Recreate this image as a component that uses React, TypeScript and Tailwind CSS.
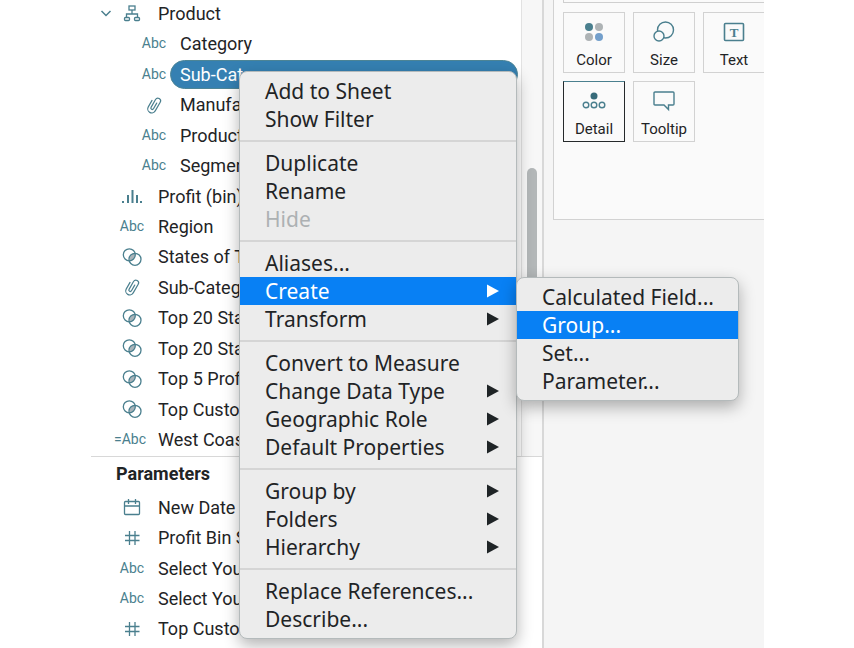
import type { ReactNode } from "react";

type IconKind = "tree" | "abc" | "clip" | "bars" | "set" | "calc" | "date" | "hash";
type Field = { label: string; icon: IconKind; nested?: boolean; open?: boolean; selected?: boolean };

const fields: Field[] = [
  { label: "Product", icon: "tree", open: true },
  { label: "Category", icon: "abc", nested: true },
  { label: "Sub-Category", icon: "abc", nested: true, selected: true },
  { label: "Manufact", icon: "clip", nested: true },
  { label: "Product Name", icon: "abc", nested: true },
  { label: "Segment", icon: "abc", nested: true },
  { label: "Profit (bin)", icon: "bars" },
  { label: "Region", icon: "abc" },
  { label: "States of Top", icon: "set" },
  { label: "Sub-Category", icon: "clip" },
  { label: "Top 20 States", icon: "set" },
  { label: "Top 20 States", icon: "set" },
  { label: "Top 5 Profit", icon: "set" },
  { label: "Top Customers", icon: "set" },
  { label: "West Coast", icon: "calc" },
];

const parameters: Field[] = [
  { label: "New Date", icon: "date" },
  { label: "Profit Bin Size", icon: "hash" },
  { label: "Select Your", icon: "abc" },
  { label: "Select Your", icon: "abc" },
  { label: "Top Customers", icon: "hash" },
];

function FieldIcon({ kind }: { kind: IconKind }) {
  const svg = "h-5 w-5 fill-none stroke-current";
  switch (kind) {
    case "abc":
      return <span>Abc</span>;
    case "calc":
      return <span className="-ml-1">=Abc</span>;
    case "tree":
      return (
        <svg viewBox="0 0 20 20" className={svg} strokeWidth="1.3">
          <rect x="7" y="3" width="6" height="4" />
          <path d="M10 7v4M4.500 14v-3h11v3" />
          <rect x="2.500" y="14.500" width="5" height="3" rx="1" />
          <rect x="12.500" y="14.500" width="5" height="3" rx="1" />
        </svg>
      );
    case "clip":
      return (
        <svg viewBox="0 0 20 20" className={svg} strokeWidth="1.2" strokeLinecap="round">
          <path
            transform="rotate(30 10 10)"
            d="M6 7v7.500a4 4 0 0 0 8 0V4.500a2.700 2.700 0 0 0-5.400 0V13.500a1.400 1.400 0 0 0 2.800 0V7"
          />
        </svg>
      );
    case "bars":
      return (
        <svg viewBox="0 0 20 20" className={svg} strokeWidth="2">
          <path d="M1 15v2M6 9v8M10.500 4v13M15 9v8M19 15v2" />
        </svg>
      );
    case "set":
      return (
        <svg viewBox="0 0 20 20" className={svg} strokeWidth="1.300">
          <path d="M8 14c-1-3 1-7.500 5-8 1 3-1 7.500-5 8z" fill="#aab4ba" stroke="none" />
          <circle cx="7.300" cy="7.800" r="6" />
          <circle cx="13" cy="12.300" r="6" />
        </svg>
      );
    case "date":
      return (
        <svg viewBox="0 0 20 20" className={svg} strokeWidth="1.300">
          <rect x="2.500" y="4.500" width="15" height="13" rx="1" />
          <path d="M2.500 9h15M6.500 2v5M13.500 2v5" />
        </svg>
      );
    case "hash":
      return (
        <svg viewBox="0 0 20 20" className={svg} strokeWidth="1.300">
          <path d="M7.500 3v14M13 3v14M3 7.500h14.500M3 12.500h14.500" />
        </svg>
      );
  }
}

function FieldRow({ field }: { field: Field }) {
  return (
    <li className={`flex min-h-0 flex-1 items-center ${field.nested ? "pl-[47px]" : "pl-[9px]"}`}>
      {!field.nested && (
        <span className="flex w-4 text-[#4a7f8e]">
          {field.open && (
            <svg viewBox="0 0 12 12" className="h-3 w-3 fill-none stroke-current" strokeWidth="1.500">
              <path d="M1.500 4 6 8.500 10.500 4" />
            </svg>
          )}
        </span>
      )}
      <span className="flex h-5 w-8 shrink-0 items-center justify-center text-[14px] whitespace-nowrap text-[#4a7f8e]">
        <FieldIcon kind={field.icon} />
      </span>
      <button
        type="button"
        className={`flex h-[29px] items-center whitespace-nowrap text-left text-[18px] ${
          field.selected
            ? "mr-6 flex-1 rounded-full border border-[#4d8596] bg-[#3580b2] pl-[9px] text-white"
            : "pl-[10px] text-[#1f2426]"
        }`}
      >
        {field.label}
      </button>
    </li>
  );
}

function Mark({ label, active, children }: { label: string; active?: boolean; children: ReactNode }) {
  return (
    <button
      type="button"
      className={`flex h-[61px] w-[62px] shrink-0 flex-col items-center justify-between border bg-[#fafafa] pt-[7px] pb-[2px] text-[15px] leading-5 text-[#1f2426] ${
        active ? "border-[#25292b] border-t-[#4a7f8e]" : "border-[#d2d2d2]"
      }`}
    >
      <svg viewBox="0 0 24 24" className="h-6 w-6 fill-none stroke-[#4a7f8e]" strokeWidth="1.400">
        {children}
      </svg>
      <span>{label}</span>
    </button>
  );
}

type Item = { label: string; arrow?: boolean; disabled?: boolean; active?: boolean; submenu?: Item[] };

const menu: Item[][] = [
  [{ label: "Add to Sheet" }, { label: "Show Filter" }],
  [{ label: "Duplicate" }, { label: "Rename" }, { label: "Hide", disabled: true }],
  [
    { label: "Aliases..." },
    {
      label: "Create",
      arrow: true,
      active: true,
      submenu: [
        { label: "Calculated Field..." },
        { label: "Group...", active: true },
        { label: "Set..." },
        { label: "Parameter..." },
      ],
    },
    { label: "Transform", arrow: true },
  ],
  [
    { label: "Convert to Measure" },
    { label: "Change Data Type", arrow: true },
    { label: "Geographic Role", arrow: true },
    { label: "Default Properties", arrow: true },
  ],
  [
    { label: "Group by", arrow: true },
    { label: "Folders", arrow: true },
    { label: "Hierarchy", arrow: true },
  ],
  [{ label: "Replace References..." }, { label: "Describe..." }],
];

const menuBox =
  "absolute rounded-lg border border-[#b4babb] bg-[#ececec] py-[5px] shadow-[0_6px_16px_rgba(0,0,0,0.3)]";

function MenuItem({ item }: { item: Item }) {
  return (
    <li className="relative">
      <button
        type="button"
        disabled={item.disabled}
        className={`flex h-7 w-full items-center justify-between pr-[17px] pl-[25px] text-left text-[21px] leading-7 whitespace-nowrap ${
          item.active ? "bg-[#0880f4] text-white" : item.disabled ? "text-[#adb1b3]" : "text-[#1f2426]"
        }`}
      >
        {item.label}
        {item.arrow && (
          <svg viewBox="0 0 12 14" className="h-[14px] w-3 fill-current">
            <path d="M0 0.500 12 7 0 13.500z" />
          </svg>
        )}
      </button>
      {item.submenu && (
        <ul className={`${menuBox} top-0 left-full w-[223px]`}>
          {item.submenu.map((sub) => (
            <MenuItem key={sub.label} item={sub} />
          ))}
        </ul>
      )}
    </li>
  );
}

export default function App() {
  return (
    <div className="relative h-screen overflow-hidden bg-white pr-[90px] pl-[91px] font-['Roboto',sans-serif]">
      <div className="flex h-full">
        <aside className="flex w-[453px] shrink-0 flex-col border-r-2 border-[#d8d8d8]">
          <div className="flex h-[457px] shrink-0 border-b border-[#d8d8d8]">
            <div className="flex min-w-0 flex-1 flex-col justify-end overflow-hidden pb-px">
              <ul className="-mr-[21px] flex h-[457px] shrink-0 flex-col">
                {fields.map((field, i) => (
                  <FieldRow key={i} field={field} />
                ))}
              </ul>
            </div>
            <div className="w-[21px] border-l border-[#e2e2e2] bg-[#f7f7f7] px-[5px] pt-[168px]">
              <div className="h-[200px] rounded-full bg-[#b3b7b8]" />
            </div>
          </div>
          <h2 className="pt-[5px] pl-[25px] text-[18px] leading-6 font-bold text-[#1f2426]">Parameters</h2>
          <ul className="mt-[6px] flex h-[152px] flex-col">
            {parameters.map((field, i) => (
              <FieldRow key={i} field={field} />
            ))}
          </ul>
        </aside>
        <main className="min-w-0 flex-1 overflow-hidden bg-[#f5f5f5] pl-[9px]">
          <section className="h-[220px] border-b border-l border-[#d2d2d2] bg-[#fafafa] pl-[9px]">
            <div className="mb-[9px] h-[3px] border-b border-l border-[#cfcfcf]" />
            <div className="flex gap-2">
              <Mark label="Color">
                <g stroke="none">
                  <circle cx="7" cy="7" r="4" fill="#4a7f8e" />
                  <circle cx="17" cy="7" r="4" fill="#aeb3b5" />
                  <circle cx="7" cy="17" r="4" fill="#aeb3b5" />
                  <circle cx="17" cy="17" r="4" fill="#739fcb" />
                </g>
              </Mark>
              <Mark label="Size">
                <circle cx="13.500" cy="10" r="8" />
                <circle cx="7" cy="16" r="5" fill="#fafafa" />
              </Mark>
              <Mark label="Text">
                <rect x="2.500" y="3.500" width="19" height="17" rx="1" strokeWidth="1.600" />
                <text
                  x="12"
                  y="16.500"
                  textAnchor="middle"
                  className="fill-[#4a7f8e] stroke-none font-['Liberation_Serif',serif] text-[13px] font-bold"
                >
                  T
                </text>
              </Mark>
            </div>
            <div className="mt-2 flex gap-2">
              <Mark label="Detail" active>
                <circle cx="12" cy="7" r="3.500" fill="#376b7a" stroke="none" />
                <circle cx="4" cy="16" r="2.800" />
                <circle cx="12" cy="16" r="2.800" />
                <circle cx="20" cy="16" r="2.800" />
              </Mark>
              <Mark label="Tooltip">
                <path d="M3 3h18q1 0 1 1v11q0 1-1 1h-4.500v4.500L12 16H3q-1 0-1-1V4q0-1 1-1z" />
              </Mark>
            </div>
          </section>
        </main>
      </div>
      <nav
        aria-label="Field actions"
        className={`${menuBox} top-[71px] left-[239px] w-[278px] font-['Noto_Sans',sans-serif]`}
      >
        {menu.map((group, i) => (
          <ul
            key={i}
            className={i > 0 ? "mt-[7px] border-t-2 border-[#d5d5d5] pt-[7px]" : ""}
          >
            {group.map((item) => (
              <MenuItem key={item.label} item={item} />
            ))}
          </ul>
        ))}
      </nav>
    </div>
  );
}
